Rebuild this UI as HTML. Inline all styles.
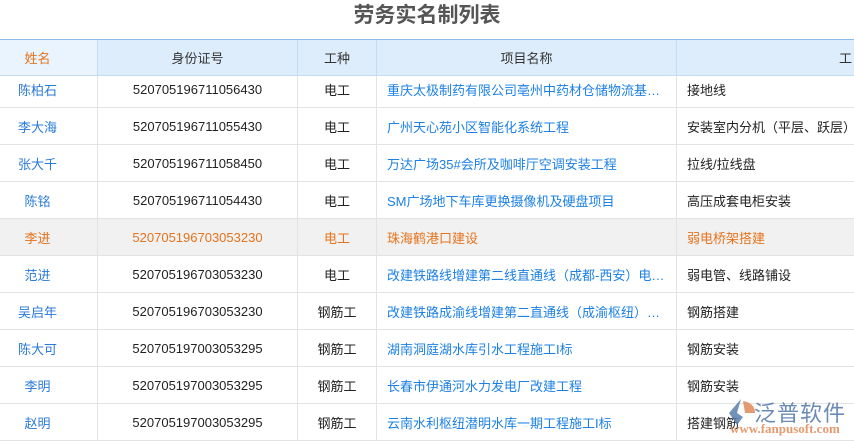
<!DOCTYPE html>
<html><head><meta charset="utf-8"><style>
*{margin:0;padding:0;box-sizing:border-box}
body{width:854px;height:441px;overflow:hidden;background:#fff;font-family:"Liberation Sans","Noto Sans CJK SC",sans-serif;font-size:13px;color:#222;position:relative}
.title{position:absolute;left:0;top:1px;width:854px;text-align:center;font-size:21px;font-weight:bold;color:#555;line-height:30px}
.hdr{position:absolute;left:0;top:39px;width:854px;height:37px;background:#deedfb;border-top:1px solid #8dbbe6;border-bottom:1px solid #c5dcf2}
.c{position:absolute;top:0;height:100%;display:flex;align-items:center;justify-content:center;white-space:nowrap;overflow:hidden}
.hdr .c{color:#333}
.row{position:absolute;left:0;width:854px;height:37px;border-bottom:1px solid #e3e3e3;background:#fff}
.b{border-right:1px solid #e3e3e3}
.hdr .b{border-right:1px solid #c5dcf2}
.c1{left:0;width:98px;color:#2a7ad8;padding-right:22px}
.c2{left:98px;width:200px}
.c3{left:298px;width:79px}
.c4{left:377px;width:300px;justify-content:flex-start;padding-left:10px;color:#1c80e4}
.c5{left:677px;width:200px;justify-content:flex-start;padding-left:10px}
.hl{background:#f1f1f1}
.hl .c{color:#e5731b!important}
</style></head><body>
<div class="title">劳务实名制列表</div>
<div class="row" style="top:71px"><div class="c c1 b">陈柏石</div><div class="c c2 b">520705196711056430</div><div class="c c3 b">电工</div><div class="c c4 b">重庆太极制药有限公司亳州中药材仓储物流基…</div><div class="c c5">接地线</div></div>
<div class="hdr"><div class="c c1 b" style="background:#e9f4fe;color:#e5731b">姓名</div><div class="c c2 b">身份证号</div><div class="c c3 b">工种</div><div class="c c4 b" style="justify-content:center;padding:0;color:#333">项目名称</div><div class="c" style="left:677px;width:200px;justify-content:flex-end;padding-right:25px">工</div></div>
<div class="row" style="top:108px"><div class="c c1 b">李大海</div><div class="c c2 b">520705196711055430</div><div class="c c3 b">电工</div><div class="c c4 b">广州天心苑小区智能化系统工程</div><div class="c c5">安装室内分机（平层、跃层）</div></div>
<div class="row" style="top:145px"><div class="c c1 b">张大千</div><div class="c c2 b">520705196711058450</div><div class="c c3 b">电工</div><div class="c c4 b">万达广场35#会所及咖啡厅空调安装工程</div><div class="c c5">拉线/拉线盘</div></div>
<div class="row" style="top:182px"><div class="c c1 b">陈铭</div><div class="c c2 b">520705196711054430</div><div class="c c3 b">电工</div><div class="c c4 b">SM广场地下车库更换摄像机及硬盘项目</div><div class="c c5">高压成套电柜安装</div></div>
<div class="row hl" style="top:219px"><div class="c c1 b">李进</div><div class="c c2 b">520705196703053230</div><div class="c c3 b">电工</div><div class="c c4 b">珠海鹤港口建设</div><div class="c c5">弱电桥架搭建</div></div>
<div class="row" style="top:256px"><div class="c c1 b">范进</div><div class="c c2 b">520705196703053230</div><div class="c c3 b">电工</div><div class="c c4 b">改建铁路线增建第二线直通线（成都-西安）电…</div><div class="c c5">弱电管、线路铺设</div></div>
<div class="row" style="top:293px"><div class="c c1 b">吴启年</div><div class="c c2 b">520705196703053230</div><div class="c c3 b">钢筋工</div><div class="c c4 b">改建铁路成渝线增建第二直通线（成渝枢纽）…</div><div class="c c5">钢筋搭建</div></div>
<div class="row" style="top:330px"><div class="c c1 b">陈大可</div><div class="c c2 b">520705197003053295</div><div class="c c3 b">钢筋工</div><div class="c c4 b">湖南洞庭湖水库引水工程施工I标</div><div class="c c5">钢筋安装</div></div>
<div class="row" style="top:367px"><div class="c c1 b">李明</div><div class="c c2 b">520705197003053295</div><div class="c c3 b">钢筋工</div><div class="c c4 b">长春市伊通河水力发电厂改建工程</div><div class="c c5">钢筋安装</div></div>
<div class="row" style="top:404px"><div class="c c1 b">赵明</div><div class="c c2 b">520705197003053295</div><div class="c c3 b">钢筋工</div><div class="c c4 b">云南水利枢纽潜明水库一期工程施工I标</div><div class="c c5">搭建钢筋</div></div>
<svg style="position:absolute;left:725px;top:397px" width="34" height="30" viewBox="0 0 34 30"><path d="M16 2 L4 16 L12 28 L18 20 L12 16 Z" fill="#5b7fae" opacity=".85"/><path d="M18 4 Q30 6 30 16 L20 16 Z" fill="#e08a58" opacity=".85"/></svg>
<div style="position:absolute;left:754px;top:396px;font-size:22px;color:#5b7fae;letter-spacing:1px;opacity:.9">泛普软件</div>
<div style="position:absolute;left:730px;top:421px;font-size:13px;font-family:'Liberation Serif',serif;color:#e08a58;font-weight:bold;opacity:.85">www.fanpusoft.com</div>
</body></html>
